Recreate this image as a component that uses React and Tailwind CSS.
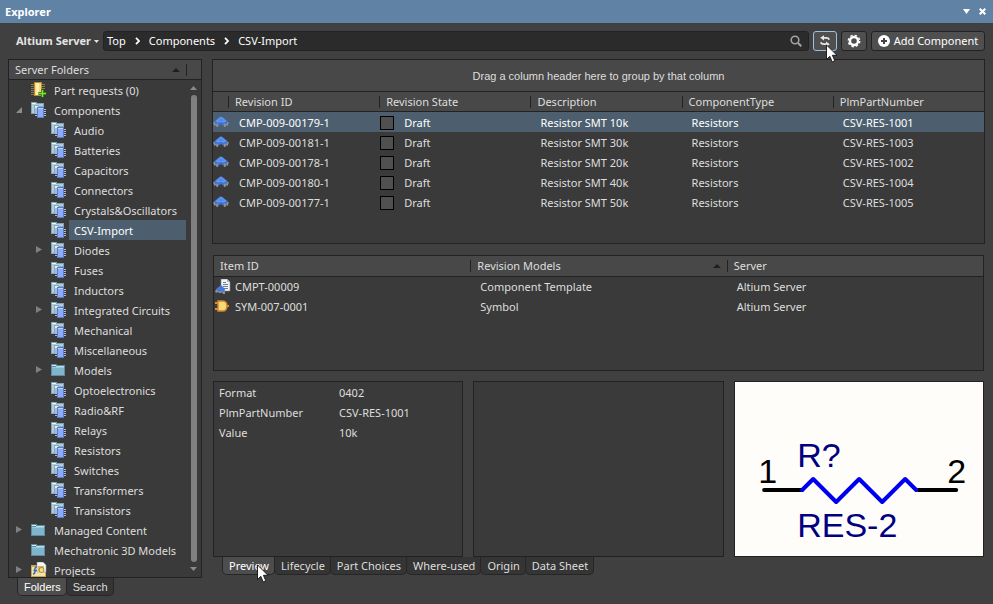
import { useState } from 'react';
import clsx from 'clsx';

const TREE = [
  { label: 'Part requests (0)', icon: 'request', level: 0 },
  { label: 'Components', icon: 'parts', level: 0, arrow: 'open' },
  { label: 'Audio', icon: 'parts', level: 1 },
  { label: 'Batteries', icon: 'parts', level: 1 },
  { label: 'Capacitors', icon: 'parts', level: 1 },
  { label: 'Connectors', icon: 'parts', level: 1 },
  { label: 'Crystals&Oscillators', icon: 'parts', level: 1 },
  { label: 'CSV-Import', icon: 'parts', level: 1 },
  { label: 'Diodes', icon: 'parts', level: 1, arrow: 'closed' },
  { label: 'Fuses', icon: 'parts', level: 1 },
  { label: 'Inductors', icon: 'parts', level: 1 },
  { label: 'Integrated Circuits', icon: 'parts', level: 1, arrow: 'closed' },
  { label: 'Mechanical', icon: 'parts', level: 1 },
  { label: 'Miscellaneous', icon: 'parts', level: 1 },
  { label: 'Models', icon: 'folder', level: 1, arrow: 'closed' },
  { label: 'Optoelectronics', icon: 'parts', level: 1 },
  { label: 'Radio&RF', icon: 'parts', level: 1 },
  { label: 'Relays', icon: 'parts', level: 1 },
  { label: 'Resistors', icon: 'parts', level: 1 },
  { label: 'Switches', icon: 'parts', level: 1 },
  { label: 'Transformers', icon: 'parts', level: 1 },
  { label: 'Transistors', icon: 'parts', level: 1 },
  { label: 'Managed Content', icon: 'folder', level: 0, arrow: 'closed' },
  { label: 'Mechatronic 3D Models', icon: 'folder', level: 0 },
  { label: 'Projects', icon: 'projects', level: 0, arrow: 'closed' },
];

const REVISIONS = [
  { id: 'CMP-009-00179-1', description: 'Resistor SMT 10k', plm: 'CSV-RES-1001' },
  { id: 'CMP-009-00181-1', description: 'Resistor SMT 30k', plm: 'CSV-RES-1003' },
  { id: 'CMP-009-00178-1', description: 'Resistor SMT 20k', plm: 'CSV-RES-1002' },
  { id: 'CMP-009-00180-1', description: 'Resistor SMT 40k', plm: 'CSV-RES-1004' },
  { id: 'CMP-009-00177-1', description: 'Resistor SMT 50k', plm: 'CSV-RES-1005' },
];

const MODELS = [
  { id: 'CMPT-00009', model: 'Component Template', server: 'Altium Server', icon: 'template' },
  { id: 'SYM-007-0001', model: 'Symbol', server: 'Altium Server', icon: 'symbol' },
];

const PARAMETERS = [
  ['Format', '0402'],
  ['PlmPartNumber', 'CSV-RES-1001'],
  ['Value', '10k'],
];

const DETAIL_TABS = ['Preview', 'Lifecycle', 'Part Choices', 'Where-used', 'Origin', 'Data Sheet'];

function PartsIcon() {
  return (
    <svg className="size-4 shrink-0" viewBox="0 0 16 16" shapeRendering="crispEdges" aria-hidden="true">
      <path d="M0 0h6v1h7v11H0z" fill="#7ea5b4" />
      <path d="M1 1h4v1H1z" fill="#eef8fb" />
      <path d="M1 2h11v9H1z" fill="#b4cedb" />
      <path d="M3 3h5v1h5v8H3z" fill="#86abbc" />
      <path d="M4 4h3v1h6v1H4z" fill="#e2f1f7" />
      <path d="M4 6h8v5H4z" fill="#9fc0d3" />
      <path d="M4 7h2v1H4zM4 9h2v1H4zM4 11h2v1H4zM4 13h2v1H4zM13 7h2v1h-2zM13 9h2v1h-2zM13 11h2v1h-2zM13 13h2v1h-2z" fill="#a9bbe2" />
      <path d="M6 5h7v11H6z" fill="#5b7cc4" />
      <path d="M7 6h5v9H7z" fill="#8cacf7" />
      <path d="M7 6h5v1H7z" fill="#bdd0fc" />
    </svg>
  );
}

function FolderIcon() {
  return (
    <svg className="size-4 shrink-0" viewBox="0 0 16 16" shapeRendering="crispEdges" aria-hidden="true">
      <path d="M0 2h6v1h8v11H0z" fill="#5d8ba0" />
      <path d="M1 3h4v1H1z" fill="#d5ecf5" />
      <path d="M5 4h8v1H5z" fill="#b7dcea" />
      <path d="M1 5h12v8H1z" fill="#80b3cc" />
      <path d="M1 5h12v1H1z" fill="#9ccbdf" />
    </svg>
  );
}

function RequestIcon() {
  return (
    <svg className="size-4 shrink-0" viewBox="0 0 16 16" aria-hidden="true">
      <path d="M0 2.500h14M0 4.500h14M0 6.500h14M0 8.500h12M0 10.500h9M0 12.500h9" stroke="#8f7a4c" />
      <path d="M3 0h8v14H3z" fill="#b78e2e" />
      <path d="M4 1h6v12H4z" fill="#f3d982" />
      <path d="M5 1h3v12H5z" fill="#fbedb4" />
      <path d="M11.500 7.500v8M7.500 11.500h8" stroke="#256b0c" strokeWidth="3" />
      <path d="M11.500 8v7M8 11.500h7" stroke="#7ee33c" strokeWidth="1.500" />
    </svg>
  );
}

function ProjectsIcon() {
  return (
    <svg className="size-4 shrink-0" viewBox="0 0 16 16" aria-hidden="true">
      <path d="M0 3h5l1 1h9v11H0z" fill="#c9a850" />
      <path d="M1 5h13v9H1z" fill="#f4e3a4" />
      <path d="M6 0h6l3 3v7H6z" fill="#f6f8fb" stroke="#8d97a6" strokeWidth=".6" />
      <path d="M7 4h6v5H7z" fill="#d7b24d" />
      <path d="M6 5c-3 0-2 3-2 4s0 3-2 3M2.500 8.500H6" fill="none" stroke="#3c66ad" strokeWidth="1.400" />
      <circle cx="10.500" cy="8" r="2.500" fill="#f3dc8b" stroke="#9b7a26" strokeWidth=".8" />
    </svg>
  );
}

function ChipIcon() {
  return (
    <svg className="h-3 w-4 shrink-0" viewBox="0 0 16 12" aria-hidden="true">
      <path d="M0 6.500l3-1.500 3 2.500L5 11H3.500L3 9 1.500 10zM16 6.500L13 5l-3 2.500 1 3.500h1.500l.5-2 1.500 1z" fill="#8b8f98" />
      <path d="M1 5.500L7 .5h2l6 5L13.500 8l-2-.5L10 9.500 8 8 6 9.500 4.500 7.500l-2 .5z" fill="#3f73d2" />
      <path d="M2.500 5L7.500 1h1l5 4L11 6.500 8 6 5 6.500z" fill="#639af0" />
      <path d="M5 4.500L8 2l3 2.500L8 5.500z" fill="#5388e6" />
    </svg>
  );
}

function TemplateIcon() {
  return (
    <svg className="size-4 shrink-0" viewBox="0 0 16 16" aria-hidden="true">
      <path d="M6 0h6l3 3v9H6z" fill="#f2f5f8" stroke="#7d8896" strokeWidth=".6" />
      <path d="M12 0v3h3z" fill="#aeb9c6" />
      <path d="M8 3.500h3M8 5.500h5M8 7.500h5M9 9.500h4" stroke="#6f7f92" />
      <path d="M0 12l2-2h7l1 2v3H8l-1-2-1 1H4l-1-1-2 1z" fill="#8b8f98" />
      <path d="M1 10l5-4 4 4-1 3-3-1-2 1z" fill="#4577d6" />
    </svg>
  );
}

function SymbolIcon() {
  return (
    <svg className="size-4 shrink-0" viewBox="0 0 16 16" aria-hidden="true">
      <path d="M0 4h3M0 10h3M11 7h3" stroke="#e08a2c" strokeWidth="2" />
      <path d="M3 2h5c2.500 0 4 2.500 4 5s-1.500 5-4 5H3z" fill="#f4dc77" stroke="#d9822b" strokeWidth="1.500" />
    </svg>
  );
}

const ICONS = {
  parts: PartsIcon,
  folder: FolderIcon,
  request: RequestIcon,
  projects: ProjectsIcon,
  template: TemplateIcon,
  symbol: SymbolIcon,
};

function Arrow({ state }) {
  return (
    <svg className="size-3 shrink-0" viewBox="0 0 12 12" aria-hidden="true">
      {state === 'open' && <path d="M9 3v6H3z" fill="#8c8c8c" />}
      {state === 'closed' && <path d="M3 2l6 3.500L3 9z" fill="#808080" />}
    </svg>
  );
}

function SortMark() {
  return (
    <svg className="h-1 w-2" viewBox="0 0 8 4" aria-hidden="true">
      <path d="M4 0l4 4H0z" fill="#1f1f1f" />
    </svg>
  );
}

function Pointer({ className }) {
  return (
    <svg className={clsx('pointer-events-none absolute z-10 h-5 w-3', className)} viewBox="0 0 12 20" aria-hidden="true">
      <path
        d="M.5 1v14.500l3.300-3.200 2.400 5.600 2.600-1.100-2.400-5.500h4.600z"
        fill="#fff"
        stroke="#111"
        strokeWidth=".9"
      />
    </svg>
  );
}

function Crumb({ children, last }) {
  return (
    <>
      <a href="#" className="text-white">
        {children}
      </a>
      {!last && (
        <svg className="mx-2 h-2 w-[7px]" viewBox="0 0 7 8" fill="none" stroke="#fff" strokeWidth="1.800" aria-hidden="true">
          <path d="M2 .8L5 4 2 7.200" />
        </svg>
      )}
    </>
  );
}

function Toolbar() {
  const button =
    'relative flex h-5 items-center justify-center rounded-[3px] border border-[#222] bg-[#4f4f4f] text-white';
  return (
    <div className="flex items-center px-2 pt-2">
      <button className="flex w-[95px] items-center gap-[3px] pl-2 font-bold whitespace-nowrap text-[#e4e4e4]">
        Altium Server
        <svg className="h-[3px] w-[5px] shrink-0" viewBox="0 0 5 3" aria-hidden="true">
          <path d="M0 0h5L2.500 3z" fill="#e4e4e4" />
        </svg>
      </button>
      <nav className="flex h-5 flex-1 items-center rounded-[3px] border border-[#222] bg-[#2b2b2b] px-[3px]">
        <Crumb>Top</Crumb>
        <Crumb>Components</Crumb>
        <Crumb last>CSV-Import</Crumb>
        <button className="mr-[3px] ml-auto" aria-label="Search">
          <svg className="size-3" viewBox="0 0 12 12" fill="none" stroke="#a2a2a2" aria-hidden="true">
            <circle cx="5" cy="5" r="3.800" strokeWidth="1.600" />
            <path d="M8 8l3.300 3.300" strokeWidth="2" />
          </svg>
        </button>
      </nav>
      <button
        className="relative ml-1 flex h-5 w-6 items-center justify-center rounded-[3px] border border-[#9cc0e6] bg-[#4f4f4f]"
        aria-label="Refresh"
      >
        <svg className="size-3" viewBox="0 0 12 12" fill="none" stroke="#e8e8e8" strokeWidth="1.800" aria-hidden="true">
          <path d="M4 2.800h3c1.500 0 2.700.5 3.300 1.900M8 9.200H5C3.500 9.200 2.300 8.700 1.700 7.300" />
          <path d="M5 .2v5.200L1.200 2.800zM7 6.600v5.200l3.800-2.600z" fill="#e8e8e8" stroke="none" />
        </svg>
        <Pointer className="top-3 left-3" />
      </button>
      <button className={clsx(button, 'ml-1 w-[26px]')} aria-label="Settings">
        <svg className="size-[14px]" viewBox="0 0 14 14" fill="none" stroke="#fff" aria-hidden="true">
          <circle cx="7" cy="7" r="4" strokeWidth="2.400" />
          <circle cx="7" cy="7" r="5.700" strokeWidth="1.400" strokeDasharray="2.400 2.077" />
        </svg>
      </button>
      <button className={clsx(button, 'ml-1 w-[114px] gap-1')}>
        <svg className="size-3" viewBox="0 0 12 12" aria-hidden="true">
          <circle cx="6" cy="6" r="6" fill="#fff" />
          <path d="M6 3v6M3 6h6" stroke="#444" strokeWidth="2" />
        </svg>
        Add Component
      </button>
    </div>
  );
}

function FolderTree() {
  const [selected, setSelected] = useState('CSV-Import');

  return (
    <section className="flex min-h-0 flex-1 flex-col border border-[#222] bg-[#3a3a3a]">
      <header className="flex h-5 shrink-0 items-center border-b border-[#222] bg-[#484848] pl-[6px]">
        <h2>Server Folders</h2>
        <span className="mr-[14px] ml-auto flex h-3 items-center border-r border-[#222] pr-[6px]">
          <SortMark />
        </span>
      </header>
      <div className="flex min-h-0 flex-1">
        <ul className="min-w-0 flex-1 overflow-hidden">
          {TREE.map((node) => {
            const Icon = ICONS[node.icon];
            return (
              <li key={node.label} className={clsx('flex h-5 items-center', node.level ? 'pl-6' : 'pl-1')}>
                <Arrow state={node.arrow} />
                <span className="w-[6px] shrink-0" />
                <Icon />
                <button
                  onClick={() => setSelected(node.label)}
                  className={clsx(
                    'ml-[2px] h-5 flex-1 pt-[2px] pl-[5px] text-left whitespace-nowrap',
                    selected === node.label && 'bg-[#4d5f6e] text-white'
                  )}
                >
                  {node.label}
                </button>
              </li>
            );
          })}
        </ul>
        <div className="flex w-[15px] flex-col items-center py-[6px]">
          <svg className="h-1 w-[7px] shrink-0" viewBox="0 0 7 4" aria-hidden="true">
            <path d="M3.500 0L7 4H0z" fill="#8a8a8a" />
          </svg>
          <div className="my-[5px] w-[6px] flex-1 rounded-full bg-[#808080]" />
          <svg className="h-1 w-[7px] shrink-0" viewBox="0 0 7 4" aria-hidden="true">
            <path d="M0 0h7L3.500 4z" fill="#8a8a8a" />
          </svg>
        </div>
      </div>
    </section>
  );
}

function Tabs({ items, className }) {
  const [active, setActive] = useState(items[0]);

  return (
    <div className={clsx('flex shrink-0', className)} role="tablist">
      {items.map((item) => (
        <button
          key={item}
          role="tab"
          aria-selected={active === item}
          onClick={() => setActive(item)}
          className={clsx(
            'relative -ml-px h-[18px] rounded-b-[5px] border border-t-0 border-[#262626] pr-[5px] pl-[6px] whitespace-nowrap',
            active === item ? 'bg-[#4d4d4d] text-white' : 'bg-[#353535]'
          )}
        >
          {item}
          {item === 'Preview' && <Pointer className="top-[7px] left-[34px]" />}
        </button>
      ))}
    </div>
  );
}

function HeadCell({ children, sorted, first }) {
  return (
    <th className="border-b border-[#222] p-0 text-left font-normal">
      <span className={clsx('flex h-3 items-center px-[6px]', !first && 'border-l border-[#222]')}>
        {children}
        {sorted && (
          <span className="ml-auto">
            <SortMark />
          </span>
        )}
      </span>
    </th>
  );
}

function RevisionPanel() {
  const [selected, setSelected] = useState(REVISIONS[0].id);

  return (
    <section className="h-[185px] shrink-0 border border-[#222] bg-[#3a3a3a]">
      <p className="flex h-8 items-center justify-center border-b border-[#222] bg-[#484848] font-['Liberation_Sans',sans-serif]">
        Drag a column header here to group by that column
      </p>
      <table className="w-full table-fixed border-separate border-spacing-0">
        <colgroup>
          <col className="w-[15px]" />
          <col />
          <col />
          <col />
          <col />
          <col />
        </colgroup>
        <thead>
          <tr className="h-5 bg-[#484848]">
            <th className="border-b border-[#222] p-0" />
            <HeadCell>Revision ID</HeadCell>
            <HeadCell>Revision State</HeadCell>
            <HeadCell>Description</HeadCell>
            <HeadCell>ComponentType</HeadCell>
            <HeadCell>PlmPartNumber</HeadCell>
          </tr>
        </thead>
        <tbody>
          {REVISIONS.map((row) => (
            <tr
              key={row.id}
              onClick={() => setSelected(row.id)}
              className={clsx('h-5', selected === row.id && 'bg-[#4d5f6e] text-white')}
            >
              <td className="p-0">
                <ChipIcon />
              </td>
              <td className="p-0 pt-[2px] pl-[11px]">{row.id}</td>
              <td className="p-0 pt-[2px]">
                <label className="flex items-center gap-[10px] pl-px">
                  <input type="checkbox" className="size-[14px] appearance-none border border-black bg-[#505050]" />
                  Draft
                </label>
              </td>
              <td className="p-0 pt-[2px] pl-[10px]">{row.description}</td>
              <td className="p-0 pt-[2px] pl-[10px]">Resistors</td>
              <td className="p-0 pt-[2px] pl-[10px]">{row.plm}</td>
            </tr>
          ))}
        </tbody>
      </table>
    </section>
  );
}

function ModelPanel() {
  return (
    <section className="mx-px h-[116px] shrink-0 border border-[#222] bg-[#3a3a3a]">
      <table className="w-full table-fixed border-separate border-spacing-0">
        <thead>
          <tr className="h-[21px] bg-[#484848]">
            <HeadCell first>Item ID</HeadCell>
            <HeadCell sorted>Revision Models</HeadCell>
            <HeadCell>Server</HeadCell>
          </tr>
        </thead>
        <tbody>
          {MODELS.map((row) => {
            const Icon = ICONS[row.icon];
            return (
              <tr key={row.id} className="h-5">
                <td className="p-0">
                  <span className="flex items-center gap-1 pl-px">
                    <Icon />
                    {row.id}
                  </span>
                </td>
                <td className="p-0 pl-[10px]">{row.model}</td>
                <td className="p-0 pl-[10px]">{row.server}</td>
              </tr>
            );
          })}
        </tbody>
      </table>
    </section>
  );
}

function SymbolPreview() {
  return (
    <svg className="h-full w-full" viewBox="0 0 248 174" fontFamily="Liberation Sans, Arial, sans-serif" fontSize="34">
      <path d="M29 108h38M183 108h38" stroke="#000" strokeWidth="4" strokeLinecap="round" />
      <path
        d="M67 108l11-11 23 23 23-23 23 23 23-23 11 11"
        fill="none"
        stroke="#0000f0"
        strokeWidth="4"
        strokeLinecap="round"
        strokeLinejoin="round"
      />
      <text x="23" y="101">1</text>
      <text x="212" y="101">2</text>
      <text x="62" y="85" fill="#000080">R?</text>
      <text x="62" y="155" fill="#000080">RES-2</text>
    </svg>
  );
}

function PreviewPanel() {
  return (
    <div className="mx-px grid min-h-0 flex-1 grid-cols-3 gap-[10px]">
      <dl className="grid auto-rows-[20px] grid-cols-[120px_1fr] items-center border border-[#222] bg-[#3a3a3a] px-[5px] py-px">
        {PARAMETERS.map(([name, value]) => (
          <div key={name} className="contents">
            <dt>{name}</dt>
            <dd>{value}</dd>
          </div>
        ))}
      </dl>
      <div className="border border-[#222] bg-[#3a3a3a]" />
      <div className="min-h-0 border border-[#222] bg-[#fffdfa]">
        <SymbolPreview />
      </div>
    </div>
  );
}

export default function App() {
  return (
    <div className="flex h-screen flex-col bg-[#404040] font-['Noto_Sans',sans-serif] text-[11px] leading-4 text-[#dedede]">
      <header className="flex h-[23px] shrink-0 items-center bg-[#6083a5] px-[5px] text-white">
        <h1 className="font-bold">Explorer</h1>
        <button className="ml-auto" aria-label="Panel menu">
          <svg className="h-[5px] w-[7px]" viewBox="0 0 7 5" aria-hidden="true">
            <path d="M0 0h7L3.500 5z" fill="#fff" />
          </svg>
        </button>
        <button className="mr-[2px] ml-[9px]" aria-label="Close">
          <svg className="size-[7px]" viewBox="0 0 7 7" stroke="#fff" strokeWidth="2" aria-hidden="true">
            <path d="M.7.7l5.600 5.600M6.300.7L.7 6.300" />
          </svg>
        </button>
      </header>
      <Toolbar />
      <main className="flex min-h-0 flex-1 gap-[10px] p-2">
        <aside className="flex w-[194px] shrink-0 flex-col">
          <FolderTree />
          <Tabs items={['Folders', 'Search']} className="pl-[10px] font-['Liberation_Sans',sans-serif]" />
        </aside>
        <div className="flex min-w-0 flex-1 flex-col pb-[21px]">
          <RevisionPanel />
          <div className="h-[11px] shrink-0" />
          <ModelPanel />
          <div className="h-[10px] shrink-0" />
          <PreviewPanel />
          <Tabs items={DETAIL_TABS} className="pl-[11px]" />
        </div>
      </main>
    </div>
  );
}
